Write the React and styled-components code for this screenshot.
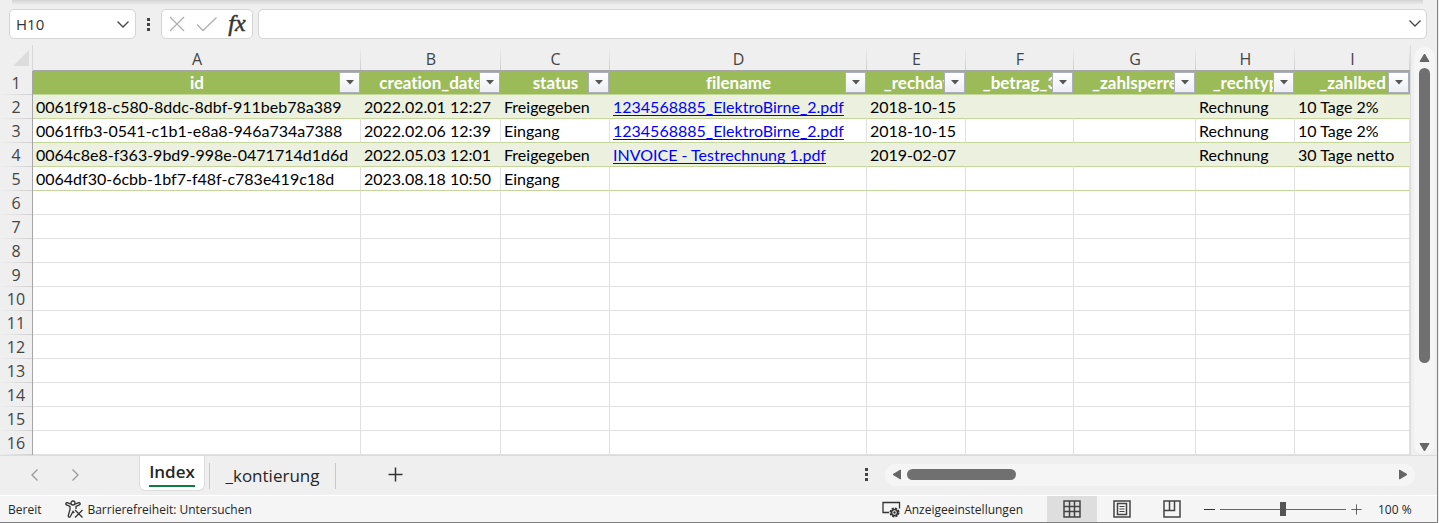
import React from "react";
import styled, { createGlobalStyle } from "styled-components";

const GlobalStyle = createGlobalStyle`
  * {
    box-sizing: border-box;
  }

  body {
    margin: 0;
    background: #efefef;
    font-family: "Open Sans", "Noto Sans", sans-serif;
    color: #262626;
  }

  button {
    padding: 0;
    border: 0;
    background: none;
    font: inherit;
    color: inherit;
    display: flex;
    align-items: center;
    justify-content: center;
  }
`;

const columns = [
  { letter: "A", name: "id", width: 328 },
  { letter: "B", name: "creation_date", width: 140 },
  { letter: "C", name: "status", width: 109 },
  { letter: "D", name: "filename", width: 257 },
  { letter: "E", name: "_rechdat", width: 99 },
  { letter: "F", name: "_betrag_3", width: 108 },
  { letter: "G", name: "_zahlsperre", width: 122 },
  { letter: "H", name: "_rechtyp", width: 99 },
  { letter: "I", name: "_zahlbed" },
];

const records = [
  ["0061f918-c580-8ddc-8dbf-911beb78a389", "2022.02.01 12:27", "Freigegeben", "1234568885_ElektroBirne_2.pdf", "2018-10-15", "", "", "Rechnung", "10 Tage 2%"],
  ["0061ffb3-0541-c1b1-e8a8-946a734a7388", "2022.02.06 12:39", "Eingang", "1234568885_ElektroBirne_2.pdf", "2018-10-15", "", "", "Rechnung", "10 Tage 2%"],
  ["0064c8e8-f363-9bd9-998e-0471714d1d6d", "2022.05.03 12:01", "Freigegeben", "INVOICE - Testrechnung 1.pdf", "2019-02-07", "", "", "Rechnung", "30 Tage netto"],
  ["0064df30-6cbb-1bf7-f48f-c783e419c18d", "2023.08.18 10:50", "Eingang", "", "", "", "", "", ""],
];

const emptyRows = [6, 7, 8, 9, 10, 11, 12, 13, 14, 15, 16];

const Window = styled.div`
  display: flex;
  flex-direction: column;
  min-height: 100vh;
  margin-right: 1px;
  border-right: 1px solid #808080;
  border-bottom: 1px solid #808080;
`;

const RibbonEdge = styled.div`
  height: 5px;
  margin: 0 14px 0 12px;
  background: linear-gradient(#d2d2d2, #efefef);
`;

const FormulaBar = styled.div`
  display: flex;
  align-items: center;
  padding: 4px 10px 6px 9px;
`;

const Box = styled.div`
  display: flex;
  align-items: center;
  height: 30px;
  background: #fff;
  border: 1px solid #d4d4d4;
  border-radius: 5px;
`;

const NameBox = styled(Box)`
  width: 127px;
  padding: 0 6px;
`;

const FormulaButtons = styled(Box)`
  width: 92px;
  margin-right: 5px;
  padding: 0 3px 0 6px;
  justify-content: space-between;
`;

const FormulaField = styled(Box)`
  flex: 1;
  padding: 0 5px 3px 8px;
`;

const TextInput = styled.input`
  flex: 1;
  min-width: 0;
  padding: 0;
  border: 0;
  outline: 0;
  background: none;
  color: #333;
  font: 15px "Open Sans", sans-serif;
`;

const Dots = styled.span`
  display: flex;
  flex-direction: column;
  align-items: center;
  gap: 2px;
  width: 25px;

  &::before,
  &::after,
  i {
    content: "";
    width: 3px;
    height: 3px;
    background: #444;
  }
`;

const FxButton = styled.button`
  width: 24px;
  height: 28px;
  padding-bottom: 2px;
  color: #333;
  font: italic 24px "Liberation Serif", serif;
  -webkit-text-stroke: 0.5px #333;
`;

const SheetArea = styled.div`
  display: flex;
`;

const Sheet = styled.table`
  flex: 1;
  width: 100%;
  min-width: 0;
  table-layout: fixed;
  border-collapse: separate;
  border-spacing: 0;
  background: #fff;
  border-right: 1px solid #dcdcdc;
  font: 16px Lato, "Open Sans", sans-serif;
  color: #000;

  th,
  td {
    padding: 0;
    height: 24px;
    line-height: 22px;
    white-space: nowrap;
    overflow: hidden;
    font-variant-ligatures: none;
  }
`;

const headFont = `
  font: 16px "Open Sans", sans-serif;
  color: #444;
`;

const Corner = styled.th`
  background: #efefef;
  border-right: 1px solid #d8d8d8;

  svg {
    display: block;
    margin-left: 13px;
  }
`;

const ColumnHead = styled.th`
  && {
    ${headFont}
    height: 26px;
    padding-top: 3px;
    background: linear-gradient(#efefef, #cfcfcf) right / 1px 100% no-repeat #efefef;
    border-bottom: 1px solid #a6a6a6;
  }
`;

const RowHead = styled.th`
  && {
    ${headFont}
    background: linear-gradient(90deg, #efefef, #cfcfcf) bottom / 100% 1px no-repeat #efefef;
    border-right: 1px solid #a6a6a6;
  }
`;

const FieldHead = styled.th`
  position: relative;
  background: #9bbb59;
  border-bottom: 1px solid #c4d79b;
  color: #fff;
  font-size: 17px;
  font-weight: bold;
`;

const FilterButton = styled.button`
  position: absolute;
  top: 1px;
  right: 1px;
  width: 21px;
  height: 21px;
  background: linear-gradient(#fff, #eceef3);
  border: 1px solid #abafbb;
`;

const Cell = styled.td`
  && {
    padding-left: 3px;
    background: ${(props) => (props.$banded ? "#ebf1de" : "#fff")};
    border-right: 1px solid ${(props) => (props.$banded ? "#ebf1de" : "#e0e0e0")};
    border-bottom: 1px solid ${(props) => (props.$filled ? "#c4d79b" : "#e0e0e0")};
  }
`;

const FileLink = styled.a`
  color: #00f;
  text-decoration: underline;
  text-decoration-skip-ink: none;
  text-underline-offset: 2px;
`;

const VerticalScroll = styled.div`
  display: flex;
  flex-direction: column;
  align-items: center;
  justify-content: space-between;
  width: 21px;
  margin: 2px 2px 0 3px;
  padding: 5px 0 2px;
  border-radius: 11px;
  background: #f5f5f5;
`;

const VerticalTrack = styled.div`
  flex: 1;
  padding: 5px 0;
`;

const VerticalThumb = styled.div`
  width: 11px;
  height: 80%;
  border-radius: 6px;
  background: #707070;
`;

const TabBar = styled.div`
  display: flex;
  align-items: center;
  height: 40px;
  padding: 0 22px 2px 15px;
  border-top: 1px solid #dcdcdc;
`;

const NavButton = styled.button`
  width: 40px;
  height: 30px;
`;

const Tabs = styled.div`
  display: flex;
  align-self: stretch;
  margin-left: 44px;
`;

const Tab = styled.button`
  height: 35px;
  font-size: 17px;

  ${(props) =>
    props.$active
      ? `
    width: 66px;
    background: #fff;
    border: 1px solid #dcdcdc;
    border-top: 0;
    border-radius: 0 0 6px 6px;
    font-weight: 600;
  `
      : `
    width: 127px;
    height: 26px;
    margin: 7px 0 0 4px;
    padding-top: 2px;
    border: solid #c8c8c8;
    border-width: 0 1px;
  `}

  span {
    line-height: 26px;
    border-bottom: 2px solid ${(props) => (props.$active ? "#107c41" : "transparent")};
  }
`;

const AddButton = styled.button`
  width: 30px;
  height: 30px;
  margin-left: 44px;
`;

const HorizontalScroll = styled.div`
  display: flex;
  align-items: center;
  width: 530px;
  height: 22px;
  margin-left: 6px;
  padding: 0 6px;
  border-radius: 11px;
  background: #f5f5f5;
`;

const HorizontalTrack = styled.div`
  flex: 1;
  padding: 0 5px;
`;

const HorizontalThumb = styled.div`
  width: 109px;
  height: 11px;
  border-radius: 6px;
  background: #707070;
`;

const Spacer = styled.div`
  flex: 1;
`;

const StatusBar = styled.footer`
  display: flex;
  flex: 1;
  align-items: center;
  min-height: 27px;
  padding: 0 23px 0 8px;
  background: #f5f5f5;
  border-top: 1px solid #fff;
  font-size: 12px;
`;

const StatusButton = styled.button`
  gap: 3px;
  margin-left: ${(props) => props.$gap || 0}px;
`;

const ViewButtons = styled.div`
  display: flex;
  align-self: stretch;
  margin: 0 7px 0 24px;
`;

const ViewButton = styled.button`
  width: 50px;
  background: ${(props) => (props.$active ? "#dedede" : "transparent")};
`;

const ZoomRange = styled.input`
  appearance: none;
  width: 126px;
  height: 14px;
  margin: 0 5px;
  background: linear-gradient(#666, #666) center / 100% 1px no-repeat;

  &::-webkit-slider-thumb {
    appearance: none;
    width: 6px;
    height: 14px;
    background: #555;
  }
`;

const ZoomValue = styled.span`
  width: 36px;
  margin-left: 16px;
  white-space: nowrap;
`;

const Chevron = ({ turn = 0, color = "#444" }) => (
  <svg width="12" height="12" viewBox="0 0 12 12" fill="none" stroke={color} strokeWidth="1.3">
    <path d="M0.5 3.5 6 9l5.5-5.5" transform={`rotate(${turn} 6 6)`} />
  </svg>
);

const Triangle = ({ turn = 0 }) => (
  <svg width="11" height="11" viewBox="0 0 11 11" fill="#666" stroke="#666" strokeLinejoin="round">
    <path d="M1 9.5h9L5.5 2Z" transform={`rotate(${turn} 5.5 5.5)`} />
  </svg>
);

const Plus = ({ size, width = 1 }) => (
  <svg width={size} height={size} viewBox="0 0 15 15" stroke="#333" strokeWidth={width}>
    <path d="M0.5 7.5h14M7.5 0.5v14" />
  </svg>
);

const AccessibilityIcon = () => (
  <svg width="19" height="19" viewBox="0 0 19 19" fill="none" stroke="#333" strokeWidth="1.3">
    <circle cx="8" cy="3" r="2" />
    <path d="M5.8 4.2 2.3 2.7C.8 2.4.3 4.3 1.6 4.9L5 6.5v3L3.3 15.5c-.4 1.7 1.6 2.3 2.2.8L8 11.5l1.2 1.5M10.2 4.2l3.5-1.5c1.5-.3 2 1.6.7 2.2L11 6.5V9M10 10l7.5 7.5M17.5 10 10 17.5" />
  </svg>
);

const DisplayIcon = () => (
  <svg width="19" height="17" viewBox="0 0 19 17" fill="none" stroke="#333" strokeWidth="1.3">
    <path d="M7 11.5H1v-10h16.5v6M3.5 11.5H7" />
    <circle cx="12.5" cy="11.5" r="4" strokeWidth="2" strokeDasharray="2 1.14" />
    <circle cx="12.5" cy="11.5" r="3" strokeWidth="1.6" />
    <circle cx="12.5" cy="11.5" r="0.6" />
  </svg>
);

const NormalViewIcon = () => (
  <svg width="18" height="18" viewBox="0 0 18 18" fill="none" stroke="#444" strokeWidth="1.5">
    <path d="M1 1h16v16H1ZM6.5 1v16M11.5 1v16M1 6.5h16M1 11.5h16" />
  </svg>
);

const PageViewIcon = () => (
  <svg width="18" height="18" viewBox="0 0 18 18" fill="none" stroke="#444" strokeWidth="1.5">
    <path d="M1 1h16v16H1ZM4.5 3.5h9v11h-9Z" />
    <path d="M6.5 6.5h5M6.5 9h5M6.5 11.5h5" strokeWidth="1.2" />
  </svg>
);

const BreakViewIcon = () => (
  <svg width="18" height="18" viewBox="0 0 18 18" fill="none" stroke="#444" strokeWidth="1.5">
    <path d="M1 1h16v16H1ZM1 10.5h10.5V1M6.5 1v9.5" />
  </svg>
);

export default function App() {
  return (
    <Window>
      <GlobalStyle />
      <RibbonEdge />
      <FormulaBar>
        <NameBox>
          <TextInput aria-label="Namenfeld" defaultValue="H10" />
          <button aria-label="Namen anzeigen">
            <Chevron />
          </button>
        </NameBox>
        <Dots>
          <i />
        </Dots>
        <FormulaButtons>
          <button aria-label="Abbrechen">
            <svg width="18" height="18" viewBox="0 0 18 18" stroke="#b0b0b0" strokeWidth="1.3">
              <path d="m2 2 14 14M16 2 2 16" />
            </svg>
          </button>
          <button aria-label="Eingeben">
            <svg width="22" height="18" viewBox="0 0 22 18" fill="none" stroke="#b0b0b0" strokeWidth="1.3">
              <path d="m2 9.5 6 6L21.500 2.5" />
            </svg>
          </button>
          <FxButton aria-label="Funktion einfügen">fx</FxButton>
        </FormulaButtons>
        <FormulaField>
          <TextInput aria-label="Bearbeitungsleiste" />
          <button aria-label="Bearbeitungsleiste erweitern">
            <Chevron />
          </button>
        </FormulaField>
      </FormulaBar>

      <SheetArea>
        <Sheet>
          <colgroup>
            <col style={{ width: 33 }} />
            {columns.map((column) => (
              <col key={column.letter} style={{ width: column.width }} />
            ))}
          </colgroup>
          <thead>
            <tr>
              <Corner>
                <svg width="16" height="16" viewBox="0 0 16 16" fill="#dcdcdc">
                  <path d="M16 0v16H0Z" />
                </svg>
              </Corner>
              {columns.map((column) => (
                <ColumnHead key={column.letter}>{column.letter}</ColumnHead>
              ))}
            </tr>
          </thead>
          <tbody>
            <tr>
              <RowHead>1</RowHead>
              {columns.map((column) => (
                <FieldHead key={column.name}>
                  {column.name}
                  <FilterButton aria-label={`${column.name} filtern`}>
                    <svg width="8" height="5" viewBox="0 0 8 5" fill="#555">
                      <path d="M0 0h8L4 4.5Z" />
                    </svg>
                  </FilterButton>
                </FieldHead>
              ))}
            </tr>
            {records.map((record, index) => (
              <tr key={record[0]}>
                <RowHead>{index + 2}</RowHead>
                {record.map((value, i) => (
                  <Cell key={columns[i].letter} $filled $banded={index % 2 === 0}>
                    {columns[i].name === "filename" && value ? <FileLink href="#">{value}</FileLink> : value}
                  </Cell>
                ))}
              </tr>
            ))}
            {emptyRows.map((row) => (
              <tr key={row}>
                <RowHead>{row}</RowHead>
                {columns.map((column) => (
                  <Cell key={column.letter} />
                ))}
              </tr>
            ))}
          </tbody>
        </Sheet>
        <VerticalScroll>
          <Triangle />
          <VerticalTrack>
            <VerticalThumb />
          </VerticalTrack>
          <Triangle turn={180} />
        </VerticalScroll>
      </SheetArea>

      <TabBar>
        <NavButton aria-label="Vorheriges Blatt">
          <Chevron turn={90} color="#999" />
        </NavButton>
        <NavButton aria-label="Nächstes Blatt">
          <Chevron turn={-90} color="#999" />
        </NavButton>
        <Tabs>
          <Tab $active>
            <span>Index</span>
          </Tab>
          <Tab>
            <span>_kontierung</span>
          </Tab>
        </Tabs>
        <AddButton aria-label="Neues Blatt">
          <Plus size={15} width={1.5} />
        </AddButton>
        <Spacer />
        <Dots>
          <i />
        </Dots>
        <HorizontalScroll>
          <Triangle turn={-90} />
          <HorizontalTrack>
            <HorizontalThumb />
          </HorizontalTrack>
          <Triangle turn={90} />
        </HorizontalScroll>
      </TabBar>

      <StatusBar>
        <span>Bereit</span>
        <StatusButton $gap={24}>
          <AccessibilityIcon />
          Barrierefreiheit: Untersuchen
        </StatusButton>
        <Spacer />
        <StatusButton>
          <DisplayIcon />
          Anzeigeeinstellungen
        </StatusButton>
        <ViewButtons>
          <ViewButton $active aria-label="Normal">
            <NormalViewIcon />
          </ViewButton>
          <ViewButton aria-label="Seitenlayout">
            <PageViewIcon />
          </ViewButton>
          <ViewButton aria-label="Umbruchvorschau">
            <BreakViewIcon />
          </ViewButton>
        </ViewButtons>
        <StatusButton aria-label="Verkleinern">
          <svg width="11" height="11" viewBox="0 0 11 11" stroke="#333">
            <path d="M0 5.5h11" />
          </svg>
        </StatusButton>
        <ZoomRange type="range" aria-label="Zoom" defaultValue="50" />
        <StatusButton aria-label="Vergrößern">
          <Plus size={11} />
        </StatusButton>
        <ZoomValue>100 %</ZoomValue>
      </StatusBar>
    </Window>
  );
}
